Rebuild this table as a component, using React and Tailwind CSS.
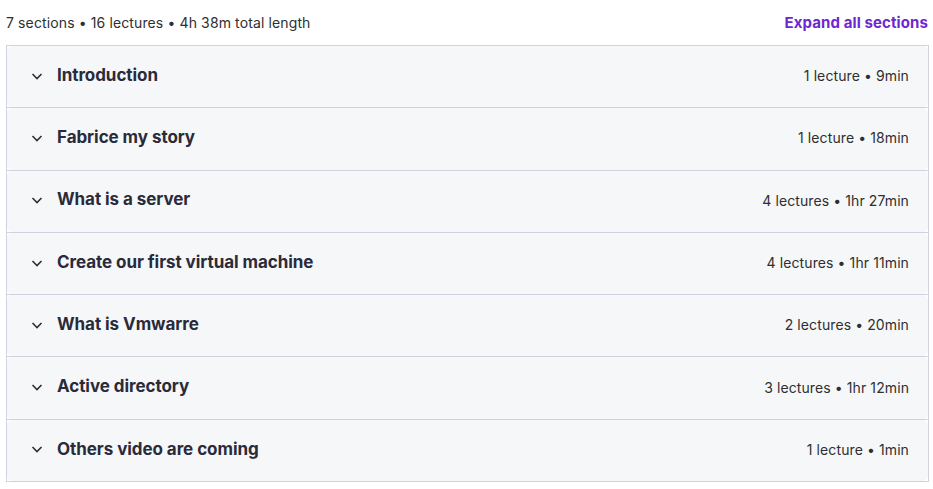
const sections = [
  { title: "Introduction", meta: "1 lecture • 9min" },
  { title: "Fabrice my story", meta: "1 lecture • 18min" },
  { title: "What is a server", meta: "4 lectures • 1hr 27min" },
  { title: "Create our first virtual machine", meta: "4 lectures • 1hr 11min" },
  { title: "What is Vmwarre", meta: "2 lectures • 20min" },
  { title: "Active directory", meta: "3 lectures • 1hr 12min" },
  { title: "Others video are coming", meta: "1 lecture • 1min" },
];

function Chevron() {
  return (
    <svg width="12" height="12" viewBox="0 0 12 12" fill="none" className="shrink-0">
      <path d="M1.5 4l4.5 4.5L10.5 4" stroke="#2d2f31" strokeWidth="1.6" />
    </svg>
  );
}

export default function App() {
  return (
    <div className="w-[933px] h-[489px] bg-white font-['Inter',sans-serif] text-[#2d2f31]">
      <div className="flex items-center justify-between pl-[6px] pr-[5px] h-[45px] pb-[1px]">
        <span className="text-[14px] tracking-[0.12px]">7 sections • 16 lectures • 4h 38m total length</span>
        <button className="text-[15px] font-bold text-[#6d28d2] tracking-[0.1px] pt-[2px]">Expand all sections</button>
      </div>
      <div className="ml-[6px] w-[923px] border border-[#d1d2e0]">
        {sections.map((s, i) => (
          <div key={s.title} className={i < sections.length - 1 ? "border-b border-[#d1d2e0]" : ""}>
            <div className="flex items-center justify-between h-[61.3px] pb-[2px] bg-[#f6f7f9] rounded-[5px] pl-[24px] pr-[19px]">
              <div className="flex items-center gap-[14px]">
                <Chevron />
                <span className="text-[17px] font-bold text-[#2a2b3a] tracking-[-0.06px]">{s.title}</span>
              </div>
              <span className="text-[14px] tracking-[0.1px]">{s.meta}</span>
            </div>
          </div>
        ))}
      </div>
    </div>
  );
}
